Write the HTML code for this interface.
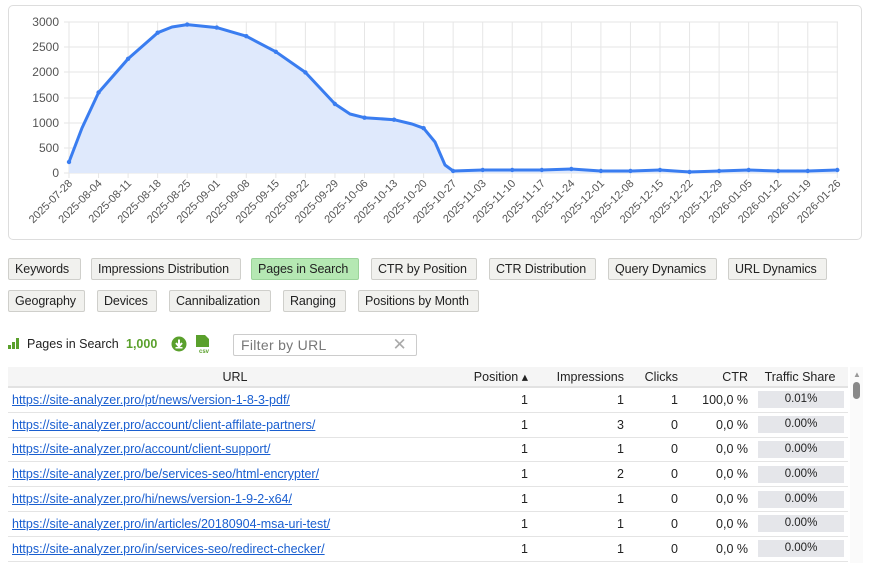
<!DOCTYPE html>
<html><head><meta charset="utf-8"><style>
body{margin:0;width:870px;height:568px;background:#fff;font-family:"Liberation Sans",Arial,sans-serif;position:relative;overflow:hidden;color:#222}
.card{position:absolute;left:8px;top:5px;width:854px;height:235px;border:1px solid #ddd;border-radius:5px;box-sizing:border-box}
.btn{position:absolute;height:22px;line-height:21px;font-size:12.5px;background:#f1f1ee;border:1px solid #cfcfcb;border-radius:2px;padding:0 6px;box-sizing:border-box;color:#222;letter-spacing:-0.1px}
.btn.on{background:#b5e8b3;border-color:#9bd39a}
table{position:absolute;left:8px;top:367px;width:840px;border-collapse:collapse;font-size:12.5px}
th{font-weight:normal;background:#f5f5f5;height:19px;border-bottom:2px solid #e2e2e2;padding:0 4px}
td{height:23.8px;border-bottom:1px solid #e4e4e4;padding:0 4px;text-align:right}
td:first-child{text-align:left}
td a{color:#1a5fd0;text-decoration:underline}
.ts{display:block;background:#e5e6ea;height:17px;line-height:17px;text-align:center;font-size:11.5px;margin-left:2px}
</style></head><body>
<div class="card"></div>
<svg style="position:absolute;left:0;top:0" width="870" height="245" font-family="Liberation Sans,Arial,sans-serif">
<g stroke="#e6e6e6" stroke-width="1">
<line x1="64" y1="22" x2="838" y2="22"/><line x1="64" y1="47" x2="838" y2="47"/><line x1="64" y1="72" x2="838" y2="72"/><line x1="64" y1="98" x2="838" y2="98"/><line x1="64" y1="123" x2="838" y2="123"/><line x1="64" y1="148" x2="838" y2="148"/><line x1="64" y1="173" x2="838" y2="173"/>
</g>
<g stroke="#e6e6e6" id="vg"></g>
<g font-size="12" fill="#555" text-anchor="end">
<text x="59" y="26">3000</text><text x="59" y="51">2500</text><text x="59" y="76">2000</text><text x="59" y="102">1500</text><text x="59" y="127">1000</text><text x="59" y="152">500</text><text x="59" y="177">0</text>
</g>
<g id="xl" font-size="11" fill="#555" text-anchor="end"></g>
<polygon fill="#dfe9fc" points="69,173 69,162 82,128 98.6,92.5 128.1,58.8 157.7,32.7 172,27 187.2,24.6 216.8,27.6 246.3,36.2 275.9,51.8 305.4,72.4 335,104 350,114 364.5,117.7 394.1,119.7 412,124 423.6,128.2 435,142 445,165 453.2,171 482.7,170 837.3,170 837.3,173"/>
<polyline fill="none" stroke="#3a7df0" stroke-width="3" stroke-linejoin="round" points="69,162 82,128 98.6,92.5 128.1,58.8 157.7,32.7 172,27 187.2,24.6 216.8,27.6 246.3,36.2 275.9,51.8 305.4,72.4 335,104 350,114 364.5,117.7 394.1,119.7 412,124 423.6,128.2 435,142 445,165 453.2,171 482.7,170 512.3,170 541.8,170 571.4,169 600.9,171 630.5,171 660,170 689.6,172 719.1,171 748.7,170 778.2,171 807.8,171 837.3,170"/>
<g id="dots" fill="#3a7df0"></g>
</svg>
<script>
var labels=["2025-07-28","2025-08-04","2025-08-11","2025-08-18","2025-08-25","2025-09-01","2025-09-08","2025-09-15","2025-09-22","2025-09-29","2025-10-06","2025-10-13","2025-10-20","2025-10-27","2025-11-03","2025-11-10","2025-11-17","2025-11-24","2025-12-01","2025-12-08","2025-12-15","2025-12-22","2025-12-29","2026-01-05","2026-01-12","2026-01-19","2026-01-26"];
var ys=[162,92.5,58.8,32.7,24.6,27.6,36.2,51.8,72.4,104,117.7,119.7,128.2,171,170,170,170,169,171,171,170,172,171,170,171,171,170];
var ns="http://www.w3.org/2000/svg",vg=document.getElementById("vg"),xl=document.getElementById("xl"),d=document.getElementById("dots");
labels.forEach(function(l,i){var x=69+29.55*i;
var ln=document.createElementNS(ns,"line");ln.setAttribute("x1",x);ln.setAttribute("x2",x);ln.setAttribute("y1",22);ln.setAttribute("y2",178);vg.appendChild(ln);
var t=document.createElementNS(ns,"text");t.setAttribute("transform","translate("+(x+4)+",184) rotate(-45)");t.textContent=l;xl.appendChild(t);
var c=document.createElementNS(ns,"circle");c.setAttribute("cx",x);c.setAttribute("cy",ys[i]);c.setAttribute("r",2.2);d.appendChild(c);});
</script>
<div class="btn" style="left:8px;top:258px;width:73px">Keywords</div>
<div class="btn" style="left:91px;top:258px;width:150px">Impressions Distribution</div>
<div class="btn on" style="left:251px;top:258px;width:108px">Pages in Search</div>
<div class="btn" style="left:371px;top:258px;width:106px">CTR by Position</div>
<div class="btn" style="left:489px;top:258px;width:107px">CTR Distribution</div>
<div class="btn" style="left:608px;top:258px;width:109px">Query Dynamics</div>
<div class="btn" style="left:728px;top:258px;width:99px">URL Dynamics</div>
<div class="btn" style="left:8px;top:290px;width:77px">Geography</div>
<div class="btn" style="left:97px;top:290px;width:60px">Devices</div>
<div class="btn" style="left:169px;top:290px;width:102px">Cannibalization</div>
<div class="btn" style="left:283px;top:290px;width:63px">Ranging</div>
<div class="btn" style="left:358px;top:290px;width:121px">Positions by Month</div>
<svg style="position:absolute;left:8px;top:338px" width="12" height="12"><rect x="0" y="7" width="3" height="4" fill="#5aa02c"/><rect x="4" y="4" width="3" height="7" fill="#5aa02c"/><rect x="8" y="0" width="3" height="11" fill="#5aa02c"/></svg>
<div style="position:absolute;left:27px;top:337px;font-size:12.5px">Pages in Search</div>
<div style="position:absolute;left:126px;top:337px;font-size:12.5px;color:#5aa02c;font-weight:bold">1,000</div>
<svg style="position:absolute;left:171px;top:336px" width="16" height="16"><circle cx="8" cy="8" r="7.5" fill="#5aa02c"/><path d="M8 3.5v6M5 7l3 3.5 3-3.5" stroke="#fff" stroke-width="2" fill="none"/><rect x="4.5" y="11" width="7" height="1.5" fill="#fff"/></svg>
<svg style="position:absolute;left:195px;top:334px" width="18" height="20"><path d="M1 1h9l4 4v8H1z" fill="#5aa02c"/><text x="4" y="19" font-size="6" fill="#5aa02c" font-family="Liberation Sans" font-weight="bold">csv</text></svg>
<div style="position:absolute;left:233px;top:334px;width:184px;height:22px;border:1px solid #ccc;border-radius:2px;box-sizing:border-box;font-size:14px;color:#777;padding:2px 7px;letter-spacing:.3px">Filter by URL<span style="position:absolute;right:9px;top:0;color:#aaa;font-size:17px">✕</span></div>
<table>
<tr><th style="text-align:center">URL</th><th style="text-align:right;width:62px">Position ▴</th><th style="width:88px;text-align:right">Impressions</th><th style="width:46px;text-align:right">Clicks</th><th style="width:62px;text-align:right">CTR</th><th style="width:88px">Traffic Share</th></tr>
<tr><td><a>https://site-analyzer.pro/pt/news/version-1-8-3-pdf/</a></td><td>1</td><td>1</td><td>1</td><td>100,0 %</td><td><span class="ts">0.01%</span></td></tr>
<tr><td><a>https://site-analyzer.pro/account/client-affilate-partners/</a></td><td>1</td><td>3</td><td>0</td><td>0,0 %</td><td><span class="ts">0.00%</span></td></tr>
<tr><td><a>https://site-analyzer.pro/account/client-support/</a></td><td>1</td><td>1</td><td>0</td><td>0,0 %</td><td><span class="ts">0.00%</span></td></tr>
<tr><td><a>https://site-analyzer.pro/be/services-seo/html-encrypter/</a></td><td>1</td><td>2</td><td>0</td><td>0,0 %</td><td><span class="ts">0.00%</span></td></tr>
<tr><td><a>https://site-analyzer.pro/hi/news/version-1-9-2-x64/</a></td><td>1</td><td>1</td><td>0</td><td>0,0 %</td><td><span class="ts">0.00%</span></td></tr>
<tr><td><a>https://site-analyzer.pro/in/articles/20180904-msa-uri-test/</a></td><td>1</td><td>1</td><td>0</td><td>0,0 %</td><td><span class="ts">0.00%</span></td></tr>
<tr><td><a>https://site-analyzer.pro/in/services-seo/redirect-checker/</a></td><td>1</td><td>1</td><td>0</td><td>0,0 %</td><td><span class="ts">0.00%</span></td></tr>
</table>
<div style="position:absolute;left:850px;top:367px;width:13px;height:196px;background:#fafafa"></div>
<div style="position:absolute;left:853px;top:370px;font-size:8px;color:#999">▲</div>
<div style="position:absolute;left:853px;top:382px;width:7px;height:17px;background:#888;border-radius:4px"></div>
</body></html>
